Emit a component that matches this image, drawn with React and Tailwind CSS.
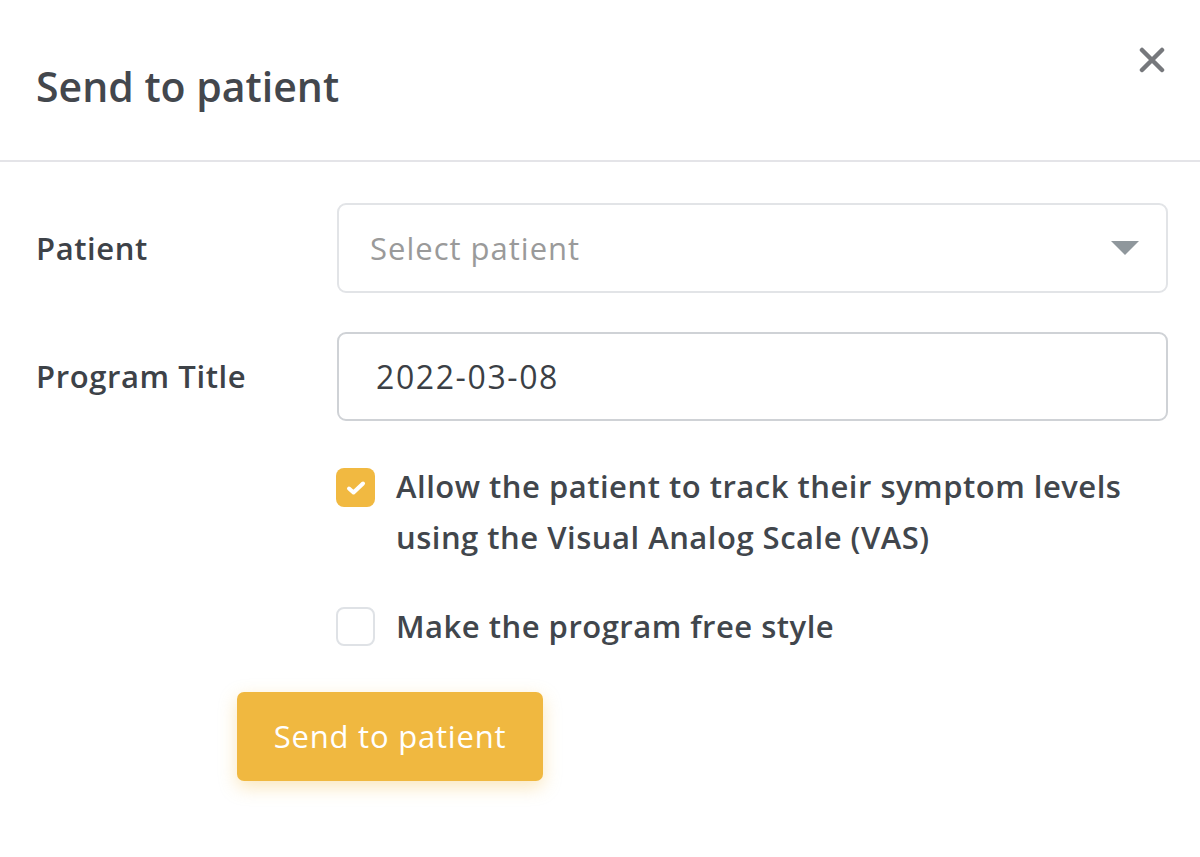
import React from 'react'

export default function App() {
  return (
    <div className="w-[1200px] h-[857px] bg-white text-[#3d4248] font-['Open_Sans','Lato',sans-serif]">
      <div className="relative h-[162px] border-b-2 border-[#e4e4e8] px-9 flex items-center">
        <h1 className="text-[41px] font-semibold text-[#43474d] mt-[14px]">Send to patient</h1>
        <button className="absolute right-[32px] top-[44px] w-8 h-8 flex items-center justify-center text-[#76787c]">
          <svg width="26" height="26" viewBox="0 0 26 26">
            <path d="M3 3 L23 23 M23 3 L3 23" stroke="currentColor" strokeWidth="4.5" strokeLinecap="round" />
          </svg>
        </button>
      </div>

      <div className="pt-[41px] pr-8">
        <div className="flex items-center">
          <label className="w-[337px] pl-9 text-[31px] tracking-[0.6px] font-semibold">Patient</label>
          <div className="flex-1 h-[90px] border-2 border-[#e2e4e7] rounded-[9px] flex items-center justify-between pl-[31px] pr-[26px]">
            <span className="text-[31px] tracking-[1px] text-[#9a9a9a]">Select patient</span>
            <svg width="30" height="16" viewBox="0 0 30 16">
              <path d="M1 1 L29 1 L15 15 Z" fill="#8f979c" />
            </svg>
          </div>
        </div>

        <div className="flex items-center mt-[39px]">
          <label className="w-[337px] pl-9 text-[31px] tracking-[0.6px] font-semibold">Program Title</label>
          <div className="flex-1 h-[89px] border-2 border-[#cfd2d6] rounded-[9px] flex items-center pl-[37px]">
            <span className="text-[32px] tracking-[1.6px] text-[#3b3f45]">2022-03-08</span>
          </div>
        </div>

        <div className="ml-[336px] mt-[40px] flex items-start gap-[21px]">
          <div className="mt-[7px] w-[39px] h-[39px] shrink-0 rounded-[8px] bg-[#f1b941] flex items-center justify-center">
            <svg width="22" height="18" viewBox="0 0 22 18">
              <path d="M4 9.5 L8.5 13.5 L18 4.5" fill="none" stroke="white" strokeWidth="4" strokeLinecap="round" strokeLinejoin="round" />
            </svg>
          </div>
          <p className="text-[31px] tracking-[0.5px] leading-[51px] font-semibold text-[#41464c]">
            Allow the patient to track their symptom levels
            <br />
            using the Visual Analog Scale (VAS)
          </p>
        </div>

        <div className="ml-[336px] mt-[40px] flex items-center gap-[21px]">
          <div className="w-[39px] h-[39px] shrink-0 rounded-[8px] border-2 border-[#dfe2e6] bg-white" />
          <span className="text-[31px] tracking-[0.5px] font-semibold text-[#41464c]">Make the program free style</span>
        </div>

        <div className="ml-[237px] mt-[42px]">
          <button className="w-[306px] h-[89px] rounded-[7px] bg-[#f0b840] text-white text-[31px] tracking-[0.8px] font-medium shadow-[0_6px_18px_rgba(240,184,64,0.35)]">
            Send to patient
          </button>
        </div>
      </div>
    </div>
  )
}
